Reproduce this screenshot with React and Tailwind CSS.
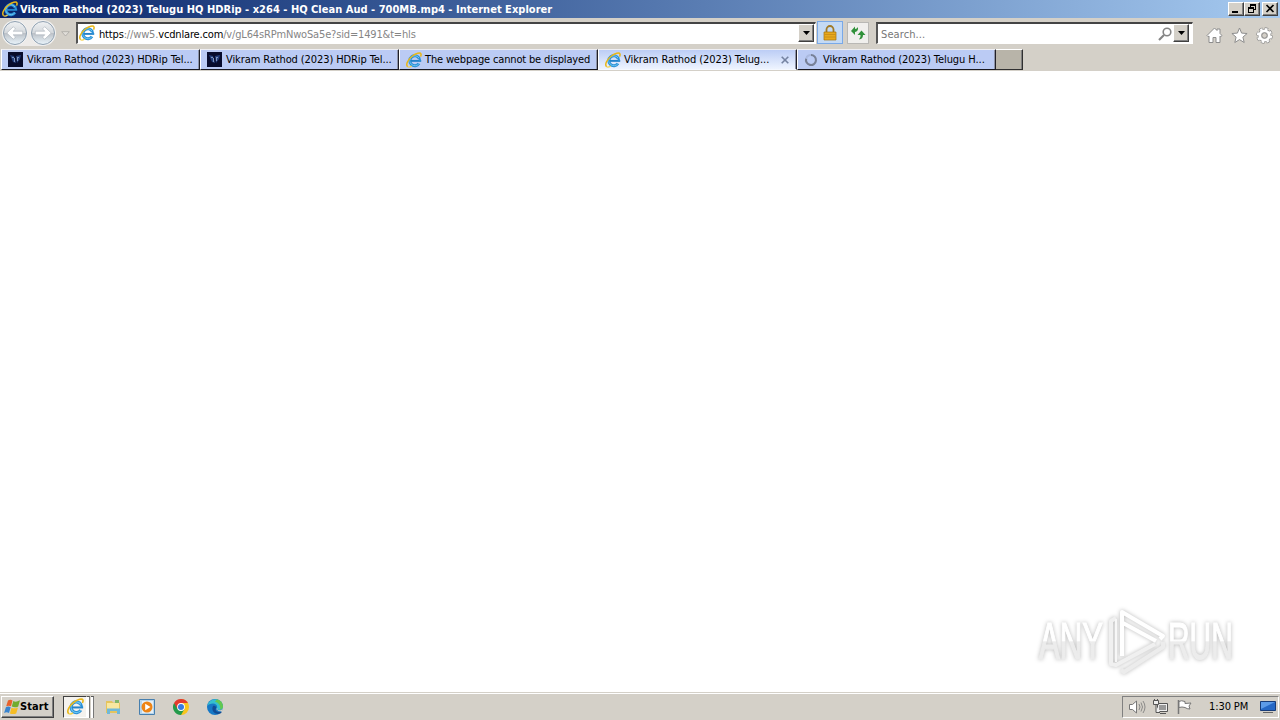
import React from 'react';

const IeIcon = ({ className }) => (
    <svg viewBox="0 0 16 16" className={className} fill="none">
        <path d="M13.300 6.500A5 5 0 1 0 13 11.500" stroke="#2b8fd6" strokeWidth="3" />
        <path d="M13.300 6.500A5 5 0 1 0 13 11.500" stroke="#6cc8f2" strokeWidth="1" />
        <path d="M4.500 8.900h10.700" stroke="#2382ca" strokeWidth="1.900" />
        <path d="M13 6q1 1 1 3" stroke="#2b8fd6" strokeWidth="2.200" />
        <path d="M1.700 14.800C-.8 12.600 2.200 7 6.400 4 10 1.300 14.300.1 15 1.900c.3.9 0 1.800-.5 2.800" stroke="#e9b718" strokeWidth="1.500" />
        <path d="M1.700 14.800c1.200.6 2.800 0 4-.8" stroke="#f5d24b" strokeWidth="1.200" />
    </svg>
);

const FaviconDark = () => (
    <svg viewBox="0 0 15 15" className="h-[15px] w-[15px] shrink-0">
        <path d="M0 0h15v15H0z" fill="#080c2c" />
        <path d="M2 3l4 1 2 7-3-1zM8 4l5-1-1 4-3 4z" fill="#243f7c" />
        <path d="M4 5h2v1H4zM9 5h2v1H9zM6 6h1v4H6zM9 6h1v3H9z" fill="#7e94bd" />
    </svg>
);

const Spinner = () => (
    <svg viewBox="0 0 14 14" className="h-[14px] w-[14px] shrink-0" fill="none">
        <path d="M7 2a5 5 0 1 1-4.800 3.500" stroke="#778097" strokeWidth="2.100" />
        <path d="M2.200 5.500A5 5 0 0 1 7 2" stroke="#aab9df" strokeWidth="2" />
    </svg>
);

const NavCircle = ({ flip }) => (
    <svg viewBox="0 0 26 26" className={flip ? 'h-[26px] w-[26px] -scale-x-100' : 'h-[26px] w-[26px]'}>
        <defs>
            <linearGradient id="nav" x1="0" y1="0" x2="0" y2="1">
                <stop offset="0" stopColor="#f0f2f4" />
                <stop offset=".48" stopColor="#d5d9dd" />
                <stop offset=".52" stopColor="#bdc2c8" />
                <stop offset="1" stopColor="#eaf5fc" />
            </linearGradient>
        </defs>
        <circle cx="13" cy="13" r="12.500" fill="#f7f7f7" />
        <circle cx="13" cy="13" r="11.500" fill="url(#nav)" stroke="#8fa0b0" />
        <path d="M4.800 13l6.500-6.300 2.200 2.200-2.300 2.300h9.500v3.600h-9.500l2.300 2.300-2.200 2.200z" fill="#fff" stroke="#a8b0b8" strokeWidth=".6" />
    </svg>
);

// classic 3D button
const raised = 'bg-[#d4d0c8] border border-t-white border-l-white border-r-[#404040] border-b-[#404040] shadow-[inset_-1px_-1px_0_#808080]';

const DropButton = () => (
    <div className={`${raised} flex h-[18px] w-[16px] shrink-0 items-center justify-center`}>
        <svg viewBox="0 0 7 4" className="h-1 w-[7px]"><path d="M0 0h7L3.500 4z" fill="#000" /></svg>
    </div>
);

const tabs = [
    { title: 'Vikram Rathod (2023) HDRip Tel...', icon: <FaviconDark />, tracking: 'tracking-[-0.1px]' },
    { title: 'Vikram Rathod (2023) HDRip Tel...', icon: <FaviconDark />, tracking: 'tracking-[-0.1px]' },
    { title: 'The webpage cannot be displayed', icon: <IeIcon className="h-4 w-4 shrink-0" />, tracking: 'tracking-[-0.16px]' },
    { title: 'Vikram Rathod (2023) Telug...', icon: <IeIcon className="h-4 w-4 shrink-0" />, tracking: 'tracking-[-0.07px]', active: true },
    { title: 'Vikram Rathod (2023) Telugu H...', icon: <Spinner />, tracking: 'tracking-[-0.07px]' },
];

const Tab = ({ tab }) => (
    <div className={`flex h-[21px] w-[199px] shrink-0 items-center border-t border-r border-b border-l border-t-[#efeff4] border-r-[#202028] border-l-white pl-[6px] shadow-[inset_-1px_0_0_#8d93a8] ${tab.active ? 'border-b-[#f4f8ff] bg-linear-to-b from-[#bccdf5] to-[#eef4ff]' : 'border-b-[#18181f] bg-[#bbcbf4]'}`}>
        <span className="flex w-[19px] shrink-0">{tab.icon}</span>
        <span className={`pt-[2px] whitespace-nowrap ${tab.tracking}`}>{tab.title}</span>
        {tab.active && (
            <svg viewBox="0 0 8 8" className="mr-[7px] ml-auto h-2 w-2"><path d="M.7.7l6.600 6.600M7.300.7L.7 7.300" stroke="#7482a0" strokeWidth="1.600" /></svg>
        )}
    </div>
);

const TitleBar = () => (
    <div className="flex h-[18px] items-center bg-linear-to-r from-[#0a246a] to-[#a6caf0] pl-[2px] pr-[2px]">
        <IeIcon className="h-4 w-4" />
        <span className="ml-[2px] pt-[2px] text-[11px] font-bold tracking-[0.02px] whitespace-nowrap text-white">Vikram Rathod (2023) Telugu HQ HDRip - x264 - HQ Clean Aud - 700MB.mp4 - Internet Explorer</span>
        <div className="ml-auto flex">
            <div className={`${raised} h-[14px] w-4`}>
                <svg viewBox="0 0 14 12" className="h-3 w-[14px]"><path d="M3 8h6v2H3z" /></svg>
            </div>
            <div className={`${raised} h-[14px] w-4`}>
                <svg viewBox="0 0 14 12" className="h-3 w-[14px]" shapeRendering="crispEdges">
                    <path d="M5 1h6v6H9V6h1V3H6v1H5zM3 4h6v6H3zM4 6v3h4V6z" fillRule="evenodd" />
                </svg>
            </div>
            <div className={`${raised} ml-[2px] h-[14px] w-4`}>
                <svg viewBox="0 0 14 12" className="h-3 w-[14px]"><path d="M3.500 2l7 7M10.500 2l-7 7" stroke="#000" strokeWidth="1.700" /></svg>
            </div>
        </div>
    </div>
);

const Toolbar = () => (
    <div className="flex h-[31px] items-start pt-[3px]">
        <div className="mt-[-1px] ml-[2px] flex gap-[2px] rounded-full bg-[#edebe9]">
            <NavCircle />
            <NavCircle flip />
        </div>
        <svg viewBox="0 0 9 6" className="mt-[10px] ml-[5px] h-[6px] w-[9px]"><path d="M.7.7h7.600L4.500 5z" fill="#e1ded9" stroke="#aaa7a3" strokeWidth=".8" /></svg>
        <div className="mt-[1px] ml-[6px] flex h-[22px] w-[740px] items-start border-t-2 border-r border-b border-l-2 border-t-[#444] border-r-white border-b-white border-l-[#555] bg-white pr-px pl-px">
            <IeIcon className="mt-[1px] h-4 w-4" />
            <span className="ml-[4px] flex-1 pt-px text-[11px] leading-[19px] tracking-[-0.16px] whitespace-nowrap text-[#858585]">
                <span className="text-black">https</span>://ww5.<span className="text-black">vcdnlare.com</span>/v/gL64sRPmNwoSa5e?sid=1491&amp;t=hls
            </span>
            <DropButton />
        </div>
        <div className="ml-px flex h-[23px] w-[26px] items-center justify-center border border-[#79a9e8] bg-[#c4daf5]">
            <svg viewBox="0 0 14 16" className="h-4 w-[14px]">
                <path d="M3.500 8V4.500a3.500 3.500 0 0 1 7 0V8" fill="none" stroke="#a07a27" strokeWidth="1.800" />
                <path d="M1 7h12v8H1z" fill="#e8a91d" stroke="#a5700e" strokeWidth=".7" />
                <path d="M1.500 9.500h11M1.500 12h11" stroke="#c48a16" strokeWidth=".8" />
            </svg>
        </div>
        <div className="mt-[1px] ml-[4px] flex h-[22px] w-[22px] items-center justify-center border border-[#b9b8b5] bg-[#f0efed]">
            <svg viewBox="0 0 16 14" className="h-[14px] w-4" fill="#30913a">
                <path d="M1 5L5 .5V3q2-.2 3-2 .5 4.500-3 5v3z" />
                <path d="M11.500 4.500L15.500 9H13q0 4-4 4.500 2-2 1.500-4.500H7.500z" />
            </svg>
        </div>
        <div className="mt-[1px] ml-[7px] flex h-[22px] w-[317px] items-start border-t-2 border-r border-b border-l-2 border-t-[#444] border-r-white border-b-white border-l-[#555] bg-white pl-[3px]">
            <span className="pt-px text-[11px] leading-[19px] tracking-[0.1px] text-[#777]">Search...</span>
            <svg viewBox="0 0 14 14" className="mt-[3px] mr-px ml-auto h-[14px] w-[14px]" fill="none" stroke="#858585">
                <circle cx="9" cy="5" r="3.800" strokeWidth="1.600" />
                <path d="M6 8l-5 5" strokeWidth="2.200" />
            </svg>
            <DropButton />
            <div className="w-[3px]" />
        </div>
        <div className="mt-[6px] ml-[13px] flex gap-[8px]">
            <svg viewBox="0 0 17 17" className="h-[17px] w-[17px]" fill="#fff" stroke="#8d8d8d">
                <path d="M1 8.500L8.500 1l2.500 2.500V2h3v4.500l2 2-1.200 1.200-.8-.7v6.500h-4V10.500H7v5H3V9l-1 .7z" />
            </svg>
            <svg viewBox="0 0 17 17" className="h-[17px] w-[17px]" fill="#fff" stroke="#8d8d8d">
                <path d="M8.500 1l2.100 5.100 5.500.4-4.200 3.600 1.300 5.400-4.700-2.900-4.700 2.900 1.300-5.400L.9 6.500l5.500-.4z" />
            </svg>
            <svg viewBox="0 0 17 17" className="h-[17px] w-[17px]" fill="none">
                <circle cx="8.500" cy="8.500" r="6.800" stroke="#8d8d8d" strokeWidth="3" strokeDasharray="3.340 2" />
                <circle cx="8.500" cy="8.500" r="5" stroke="#8d8d8d" strokeWidth="3.600" />
                <circle cx="8.500" cy="8.500" r="6.600" stroke="#fff" strokeWidth="2" strokeDasharray="2.500 2.684" strokeDashoffset="-.4" />
                <circle cx="8.500" cy="8.500" r="4.700" stroke="#fff" strokeWidth="2.800" />
                <circle cx="8.500" cy="8.500" r="2.700" stroke="#8d8d8d" strokeWidth="1" />
            </svg>
        </div>
    </div>
);

const Watermark = () => (
    <svg viewBox="0 0 200 72" className="h-[72px] w-[200px] overflow-visible drop-shadow-[0_0_2px_rgba(0,0,0,0.28)]">
        <defs>
            <linearGradient id="wm" gradientUnits="userSpaceOnUse" x1="0" y1="-37" x2="0" y2="0">
                <stop offset=".5" stopColor="#fff" />
                <stop offset=".54" stopColor="#ececec" />
            </linearGradient>
        </defs>
        <g fill="url(#wm)" stroke="url(#wm)" strokeWidth="1.200" fontFamily="'Liberation Sans', sans-serif" fontSize="52">
            <text transform="translate(2 53) scale(.6 1)">ANY</text>
            <text transform="translate(131 53) scale(.575 1)">RUN</text>
        </g>
        <g fill="none" strokeWidth="4" strokeLinejoin="round">
            <path d="M79 12l-5 3v43l5 1 39-21" stroke="#f0f0f0" />
            <path d="M84 64l3 2 39-25v-5" stroke="#ececec" />
            <path d="M79 13v43" stroke="#f7f7f7" strokeWidth="2" />
            <path d="M85 50V6l41 24-3 3M86 17l33 18" stroke="#fff" />
        </g>
    </svg>
);

const Taskbar = () => (
    <div className="flex h-[28px] items-center border-t border-[#d4d0c8] bg-[#d4d0c8] shadow-[inset_0_1px_0_#fff]">
        <div className={`${raised} ml-[1px] flex h-[22px] w-[53px] items-center pl-[2px]`}>
            <svg viewBox="0 0 17 16" className="h-4 w-[17px]">
                <path d="M4 1.500C5.500.5 7 .5 8.500 1.400L7 7.300c-1.500-.9-3-.9-4.800 0z" fill="#e8622c" />
                <path d="M9.300 2c1.500.9 3.700 1 6.700-.7L14.200 7.500c-2.200 1.200-4.300 1-6.400.1z" fill="#70ac2f" />
                <path d="M1.900 8.200c1.600-.9 3.100-.9 4.800 0L5 14c-1.500-.9-3.200-.9-4.900 0z" fill="#3984cf" />
                <path d="M7.500 8.700c1.900.9 4.200.9 6.500-.2l-1.800 5.900c-2 1-4.300.9-6.300 0z" fill="#f6bd24" />
            </svg>
            <span className="-ml-px pt-[2px] text-[11px] font-bold tracking-[0.1px]">Start</span>
        </div>
        <div className="ml-[9px] flex h-[22px] w-[32px]">
            <div className="flex w-[24px] items-center justify-center border border-t-[#404040] border-r-white border-b-white border-l-[#404040] bg-[#f4f2ee]">
                <IeIcon className="h-[17px] w-[17px]" />
            </div>
            <div className="w-[3px] border-t border-r border-t-[#555] border-r-[#777] bg-white" />
            <div className="ml-[1px] w-[3px] border-t border-r border-t-[#555] border-r-[#777] bg-white" />
        </div>
        <svg viewBox="0 0 17 16" className="ml-[10px] h-4 w-[17px]">
            <path d="M1 2h6l1 1.500h7V14H1z" fill="#e5c45d" />
            <path d="M2 4h12v7H2z" fill="#f8e7a0" />
            <path d="M2 15V9.500h13V15h-3v-3H5v3z" fill="#70b8d8" />
            <path d="M10 1h4v3h-4z" fill="#83b66a" />
        </svg>
        <svg viewBox="0 0 16 16" className="ml-[17px] h-4 w-4">
            <path d="M.5.5h15v15H.5z" fill="#b6d5ec" stroke="#477fae" />
            <path d="M3 2h11v12H3z" fill="#e6eff6" />
            <circle cx="8" cy="8" r="5.500" fill="#ed8415" />
            <path d="M6.200 4.800L11.500 8l-5.300 3.200z" fill="#fff" />
        </svg>
        <svg viewBox="0 0 16 16" className="ml-[18px] h-4 w-4">
            <path d="M8 8V0a8 8 0 0 1 0 16z" fill="#f9c51d" />
            <path d="M8 8L1.070 4A8 8 0 0 0 8 16l3.500-6z" fill="#249a4b" />
            <path d="M1.070 4A8 8 0 0 1 14.930 4H8L4.500 10z" fill="#e33b2e" />
            <circle cx="8" cy="8" r="3.900" fill="#fff" />
            <circle cx="8" cy="8" r="3" fill="#377be2" />
        </svg>
        <svg viewBox="0 0 16 16" className="ml-[18px] h-4 w-4">
            <circle cx="8" cy="8" r="8" fill="#1678c6" />
            <path d="M.2 7A8 8 0 0 1 16 7c.3 2.500-1.500 4-4 4-1.800 0-2.800-.7-2-2 1-2.500-1.500-4.500-4-4.500C3.500 4.500 1 5.500.2 7z" fill="#35bfcf" />
            <path d="M10 .3A8 8 0 0 1 16 7c.2 2-1 3.500-3 3.800 1-4-1-7-5-8z" fill="#62c850" />
            <path d="M6 7c-2 4 1 8 5 8 2 0 3-1 4-2.300-4 1.300-7.500-.7-6-3.500C9.500 8 8 6 6 7z" fill="#124c94" />
            <path d="M16 8.500c-.5 2-2 2.800-4 2.800-2.200 0-3-.8-2-2.300l1 3 4.200.5z" fill="#d4d0c8" />
        </svg>
        <div className="mr-[1px] ml-auto flex h-[22px] w-[157px] items-center border border-t-[#808080] border-r-white border-b-white border-l-[#808080] pl-[5px]">
            <svg viewBox="0 0 18 16" className="h-4 w-[18px]" fill="#fff" stroke="#777">
                <path d="M1.500 5.500h3L8.500 2v12l-4-3.500h-3z" />
                <path d="M11 5q2 3 0 6M13 3.500q3 4.500 0 9M15 2q4 6 0 12" fill="none" strokeWidth=".8" />
            </svg>
            <svg viewBox="0 0 16 16" className="ml-[6px] h-4 w-4" fill="#eee" stroke="#555">
                <path d="M5.500 4.500h10v8h-10zM8 14.500h6" />
                <path d="M7 6h7v5H7z" fill="#999" stroke="none" />
                <path d="M1.500 1.500h5v4h-5zM2.500 1V0M5.500 1V0M4 6v7.500h4" />
            </svg>
            <svg viewBox="0 0 16 16" className="ml-[8px] h-4 w-4" fill="#fff" stroke="#777">
                <path d="M2.500 15V1" strokeWidth="1.500" />
                <path d="M3 2.500q2-1.500 6 0v2l6-.5-2 3 1 3q-3 0-5-1.500-3-1-6 0z" />
            </svg>
            <span className="ml-[17px] pt-[2px] text-[11px] tracking-[-0.1px] whitespace-nowrap">1:30 PM</span>
            <svg viewBox="0 0 16 14" className="mr-[2px] ml-auto h-[14px] w-4">
                <path d="M.5 1.500h15v9H.5z" fill="#2568c5" stroke="#173c79" />
                <path d="M1 2h14L1 9z" fill="#5c9be8" />
                <path d="M3 12h10v1H3z" fill="#666" />
            </svg>
        </div>
    </div>
);

const App = () => (
    <div className="flex h-[720px] w-[1280px] flex-col overflow-hidden bg-[#d4d0c8] font-['DejaVu_Sans_Condensed','DejaVu_Sans',sans-serif] text-[11px] text-black">
        <TitleBar />
        <Toolbar />
        <div className="flex h-[22px] pl-px">
            {tabs.map((tab, i) => <Tab key={i} tab={tab} />)}
            <div className="h-[21px] w-[27px] border-t border-r border-b border-t-white border-r-[#303030] border-b-[#303030] bg-[#b8b4a9] shadow-[inset_-1px_0_0_#808080]" />
        </div>
        <div className="flex flex-1 items-end justify-end bg-white pr-[43px] pb-[14px]">
            <Watermark />
        </div>
        <Taskbar />
    </div>
);

export default App;
